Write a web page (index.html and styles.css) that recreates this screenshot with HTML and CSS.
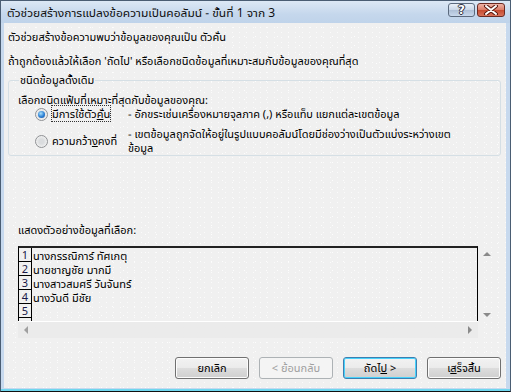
FILE: index.html
```html
<!DOCTYPE html>
<html lang="th">
<head>
    <meta charset="UTF-8">
    <title>ตัวช่วยสร้างการแปลงข้อความเป็นคอลัมน์</title>
    <link rel="stylesheet" href="styles.css">
</head>
<body>
    <div class="window">
        <header class="titlebar">
            <span class="title">ตัวช่วยสร้างการแปลงข้อความเป็นคอลัมน์ - ขั้นที่ 1 จาก 3</span>
            <div class="caption-btns">
                <span class="cap-btn help">?</span>
                <span class="cap-btn close">
                    <svg width="16" height="10" viewBox="0 0 16 10">
                        <path d="M3 1 L13 9 M13 1 L3 9" stroke="#5a1a10" stroke-width="4" stroke-linecap="round"/>
                        <path d="M3 1 L13 9 M13 1 L3 9" stroke="#fff" stroke-width="2" stroke-linecap="round"/>
                    </svg>
                </span>
            </div>
        </header>

        <div class="client">
            <p class="info first">ตัวช่วยสร้างข้อความพบว่าข้อมูลของคุณเป็น ตัวคั่น</p>
            <p class="info">ถ้าถูกต้องแล้วให้เลือก 'ถัดไป' หรือเลือกชนิดข้อมูลที่เหมาะสมกับข้อมูลของคุณที่สุด</p>

            <fieldset class="group">
                <legend>ชนิดข้อมูลดั้งเดิม</legend>
                <p class="hint">เลือกชนิดแฟ้มที่เหมาะที่สุดกับข้อมูลของคุณ:</p>
                <div class="option">
                    <span class="radio checked"></span>
                    <span class="opt-label"><span class="focus">มีการใช้ตัว<u>คั่</u>น</span></span>
                    <span class="opt-desc">- อักขระเช่นเครื่องหมายจุลภาค (,) หรือแท็บ แยกแต่ละเขตข้อมูล</span>
                </div>
                <div class="option two">
                    <span class="radio"></span>
                    <span class="opt-label">ความกว้า<u>ง</u>คงที่</span>
                    <span class="opt-desc">- เขตข้อมูลถูกจัดให้อยู่ในรูปแบบคอลัมน์โดยมีช่องว่างเป็นตัวแบ่งระหว่างเขต<br>ข้อมูล</span>
                </div>
            </fieldset>

            <p class="preview-title">แสดงตัวอย่างข้อมูลที่เลือก:</p>
            <div class="preview">
                <div class="sheet">
                    <div class="row"><span class="num">1</span><span class="cell">นางกรรณิการ์ ทัศเกตุ</span></div>
                    <div class="row"><span class="num">2</span><span class="cell">นายชาญชัย มากมี</span></div>
                    <div class="row"><span class="num">3</span><span class="cell">นางสาวสมศรี วันจันทร์</span></div>
                    <div class="row"><span class="num">4</span><span class="cell">นางวันดี มีชัย</span></div>
                    <div class="row"><span class="num">5</span><span class="cell"></span></div>
                    <div class="row"><span class="num"></span><span class="cell"></span></div>
                </div>
                <div class="vscroll">
                    <span class="arr up"></span>
                    <span class="arr down"></span>
                </div>
                <div class="hscroll">
                    <span class="arr left"></span>
                    <span class="arr right"></span>
                </div>
            </div>

            <div class="buttons">
                <button class="btn">ยกเลิก</button>
                <button class="btn" disabled>&lt; ย้อนกลับ</button>
                <button class="btn default">ถัดไ<u>ป</u> &gt;</button>
                <button class="btn">เ<u>ส</u>ร็จสิ้น</button>
            </div>
        </div>
    </div>
</body>
</html>
```

FILE: styles.css
```css
html, body {
    margin: 0;
    padding: 0;
}
body {
    font: 11px/14px Tahoma, "Noto Sans Thai UI", "Noto Sans Thai", "DejaVu Sans", "Liberation Sans", sans-serif;
    color: #000;
    background: #fff;
}

.window {
    width: 511px;
    height: 392px;
    box-sizing: border-box;
    border: 1px solid #4a5d73;
    border-bottom-color: #111;
    background: #c7d9ee;
    padding: 0 4px 3px 3px;
    display: flex;
    flex-direction: column;
    box-shadow: inset 0 -2px #6fd6ee;
}

/* title bar */
.titlebar {
    height: 22px;
    display: flex;
    align-items: center;
    justify-content: space-between;
    background: linear-gradient(#dce8f5, #c5d7ec 60%, #bfd3ea);
    margin: 0 -4px 0 -3px;
    padding: 0 5px 0 6px;
    flex-shrink: 0;
}
.title {
    font-size: 12px;
    color: #111;
    padding-top: 1px;
}
.caption-btns {
    display: flex;
    gap: 2px;
    align-self: flex-start;
    margin-top: 2px;
}
.cap-btn {
    height: 14px;
    box-sizing: border-box;
    border: 1px solid #5b6a7e;
    border-radius: 3px;
    display: flex;
    align-items: center;
    justify-content: center;
}
.help {
    width: 27px;
    background: linear-gradient(#e9f0f8, #c9d7e8 50%, #aebfd6 51%, #c8d8ec);
    color: #fff;
    font: bold 12px "DejaVu Sans", sans-serif;
    text-shadow: 0 0 1px #223, 1px 0 #334, -1px 0 #334, 0 1px #334, 0 -1px #334;
}
.close {
    width: 28px;
    border-color: #6b2a22;
    background: linear-gradient(#eeb3a6, #dc7c67 50%, #c74a2f 51%, #d8725a);
}

/* client area */
.client {
    flex: 1;
    background-color: #f0f0f0;
    background-image:
        radial-gradient(circle, #fbfbfb 0.7px, transparent 0.8px),
        radial-gradient(circle, #fdfdfd 0.7px, transparent 0.8px);
    background-size: 7px 5px, 11px 9px;
    background-position: 1px 2px, 4px 0;
    padding: 0 5px 0 4px;
    display: flex;
    flex-direction: column;
}
.info {
    margin: 0;
}
.info.first {
    margin-top: 7px;
    margin-bottom: 10px;
}

.group {
    margin: 5px 0 0 0;
    padding: 6px 10px 0 9px;
    border: 1px solid #d5dfe5;
    border-radius: 3px;
}
.group legend {
    padding: 0 1px;
    margin-left: 1px;
}
.hint {
    margin: 0 0 1px;
    line-height: 13px;
}
.option {
    display: flex;
    align-items: flex-start;
    margin-bottom: 6px;
}
.option.two {
    align-items: center;
    margin-bottom: 0;
}
.radio {
    width: 13px;
    height: 13px;
    box-sizing: border-box;
    border-radius: 50%;
    border: 1px solid #8f9194;
    background: radial-gradient(circle, #dadcde 30%, #f4f4f4 80%);
    margin: 1px 4px 0 17px;
    flex-shrink: 0;
    position: relative;
}
.option.two .radio {
    margin-top: 0;
}
.radio.checked::after {
    content: "";
    position: absolute;
    left: 2px;
    top: 2px;
    width: 7px;
    height: 7px;
    border-radius: 50%;
    background: radial-gradient(circle at 40% 35%, #a9e0fb, #2a7fd4 55%, #1c4f9a);
}
.opt-label {
    width: 76px;
    flex-shrink: 0;
    white-space: nowrap;
}
.focus {
    outline: 1px dotted #333;
}

.preview-title {
    margin: 67px 0 0 10px;
}
.preview {
    margin: 9px 0 0 10px;
    display: grid;
    grid-template-columns: 460px 18px;
    grid-template-rows: 75px 17px;
}
.sheet {
    border: 1px solid #000;
    border-width: 2px 1px 0 1px;
    border-top-color: #222;
    overflow: hidden;
}
.row {
    display: flex;
    height: 14px;
    box-sizing: border-box;
}
.num {
    width: 13px;
    height: 14px;
    flex-shrink: 0;
    border-right: 1px solid #000;
    border-bottom: 1px solid #000;
    text-align: center;
    color: #1a1a4a;
    box-sizing: border-box;
    padding-top: 1px;
    line-height: 12px;
}
.cell {
    padding: 1px 0 0 1px;
    white-space: nowrap;
    line-height: 13px;
}
.vscroll {
    position: relative;
}
.hscroll {
    position: relative;
    background: #ebebeb;
    border-top: 1px solid #fff;
}
.arr {
    position: absolute;
    width: 0;
    height: 0;
    border: 4px solid transparent;
}
.arr.up { top: 6px; left: 5px; border-bottom-color: #8a8a8a; border-top-width: 0; }
.arr.down { bottom: 4px; left: 5px; border-top-color: #8a8a8a; border-bottom-width: 0; }
.arr.left { left: 6px; top: 4px; border-right-color: #a0a0a0; border-left-width: 0; }
.arr.right { right: 6px; top: 4px; border-left-color: #8a8a8a; border-right-width: 0; }

/* dialog buttons */
.buttons {
    display: flex;
    justify-content: flex-end;
    gap: 10px;
    margin-top: 19px;
}
.btn {
    width: 74px;
    height: 22px;
    font: inherit;
    color: #000;
    border: 1px solid #707070;
    border-radius: 3px;
    background: linear-gradient(#f2f2f2, #ebebeb 50%, #dddddd 51%, #cfcfcf);
    box-shadow: inset 0 0 0 1px #fcfcfc;
    padding: 0;
}
.btn:disabled {
    border-color: #adb2b5;
    background: #f4f4f4;
    color: #a0a0a0;
    box-shadow: none;
}
.btn.default {
    border-color: #3c7fb1;
    box-shadow: inset 0 0 0 1px #48d2fb;
}
```
